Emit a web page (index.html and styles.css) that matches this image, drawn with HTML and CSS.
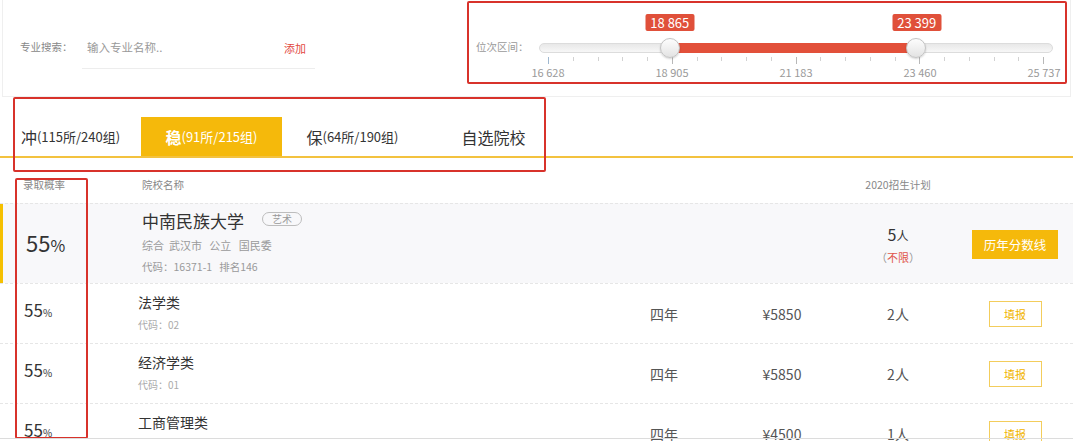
FILE: index.html
```html
<!DOCTYPE html>
<html lang="zh-CN">
<head>
<meta charset="utf-8">
<title>志愿填报</title>
<link rel="stylesheet" href="styles.css">
</head>
<body>
<div class="page">
  <section class="filters">
    <div class="search">
      <span class="search-label">专业搜索：</span>
      <div class="search-input">
        <span class="ph">输入专业名称..</span>
        <span class="add">添加</span>
      </div>
    </div>
    <div class="range">
      <span class="range-label">位次区间：</span>
      <div class="slider">
        <div class="tips">
          <span class="tip" style="left:24.56%">18 865</span>
          <span class="tip" style="left:74.33%">23 399</span>
        </div>
        <div class="track">
          <div class="track-inner">
            <div class="fill" style="left:24.56%;width:49.77%"></div>
            <span class="handle" style="left:24.56%"></span>
            <span class="handle" style="left:74.33%"></span>
          </div>
        </div>
        <div class="ticks">
          <i class="major first"></i><i></i><i></i><i></i><i></i>
          <i class="major"></i><i></i><i></i><i></i><i></i>
          <i class="major"></i><i></i><i></i><i></i><i></i>
          <i class="major"></i><i></i><i></i><i></i><i></i>
          <i class="major"></i>
        </div>
        <div class="scale">
          <span>16 628</span><span>18 905</span><span>21 183</span><span>23 460</span><span>25 737</span>
        </div>
      </div>
    </div>
  </section>

  <nav class="tabs">
    <div class="tab"><b>冲</b>(115所/240组)</div>
    <div class="tab active"><b>稳</b>(91所/215组)</div>
    <div class="tab"><b>保</b>(64所/190组)</div>
    <div class="tab"><b>自选院校</b></div>
  </nav>

  <div class="table">
    <div class="thead">
      <span class="c1">录取概率</span>
      <span class="c2">院校名称</span>
      <span></span>
      <span></span>
      <span class="c5">2020招生计划</span>
      <span></span>
    </div>

    <div class="row uni">
      <div class="c1 prob big">55<small>%</small></div>
      <div class="c2 uni-info">
        <div class="uni-name">中南民族大学 <span class="tag">艺术</span></div>
        <div class="uni-meta">综合&nbsp; 武汉市&nbsp;&nbsp; 公立&nbsp;&nbsp; 国民委</div>
        <div class="uni-code">代码：16371-1&nbsp;&nbsp; 排名146</div>
      </div>
      <div></div>
      <div></div>
      <div class="c5 plan">
        <div class="plan-num">5<small>人</small></div>
        <div class="plan-limit">（<em>不限</em>）</div>
      </div>
      <div class="c6"><span class="btn-solid">历年分数线</span></div>
    </div>

    <div class="row">
      <div class="c1 prob">55<small>%</small></div>
      <div class="c2 major">
        <div class="major-name">法学类</div>
        <div class="major-code">代码：02</div>
      </div>
      <div class="cc">四年</div>
      <div class="cc">¥5850</div>
      <div class="c5 cc">2人</div>
      <div class="c6"><span class="btn-line">填报</span></div>
    </div>

    <div class="row">
      <div class="c1 prob">55<small>%</small></div>
      <div class="c2 major">
        <div class="major-name">经济学类</div>
        <div class="major-code">代码：01</div>
      </div>
      <div class="cc">四年</div>
      <div class="cc">¥5850</div>
      <div class="c5 cc">2人</div>
      <div class="c6"><span class="btn-line">填报</span></div>
    </div>

    <div class="row">
      <div class="c1 prob">55<small>%</small></div>
      <div class="c2 major">
        <div class="major-name">工商管理类</div>
      </div>
      <div class="cc">四年</div>
      <div class="cc">¥4500</div>
      <div class="c5 cc">1人</div>
      <div class="c6"><span class="btn-line">填报</span></div>
    </div>
  </div>

  <div class="mark mark-range"></div>
  <div class="mark mark-tabs"></div>
  <div class="mark mark-prob"></div>
  <div class="bottom-edge"></div>
</div>
</body>
</html>
```

FILE: styles.css
```css
* {
  box-sizing: border-box;
  margin: 0;
  padding: 0;
}

body {
  margin: 0;
  background: #fff;
  color: #333;
  font-family: "Noto Sans CJK SC", "Noto Sans", sans-serif;
  width: 1080px;
  height: 441px;
  overflow: hidden;
}

.page {
  position: relative;
  width: 1080px;
  height: 441px;
  overflow: hidden;
}

/* ---------- filters ---------- */
.filters {
  display: flex;
  width: 1069px;
  height: 97px;
  margin-left: 2px;
  border: 1px solid #efefef;
  border-top: none;
}

.search {
  width: 464px;
  display: flex;
  align-items: flex-start;
  padding: 36px 0 0 17px;
}

.search-label {
  width: 62px;
  font-size: 10.5px;
  line-height: 22px;
  color: #888;
}

.search-input {
  width: 233px;
  height: 33px;
  border-bottom: 1px solid #ededed;
  display: flex;
  justify-content: space-between;
  padding: 0 9px 0 5px;
}

.ph {
  font-size: 11.5px;
  line-height: 22px;
  color: #9a9a9a;
}

.add {
  font-size: 11px;
  line-height: 24px;
  color: #e2483f;
}

.range {
  flex: 1;
  display: flex;
  align-items: flex-start;
  padding-left: 9px;
}

.range-label {
  width: 63px;
  margin-top: 36px;
  font-size: 10.5px;
  line-height: 22px;
  color: #9a9a9a;
}

.slider {
  width: 514px;
}

.tips {
  position: relative;
  height: 17px;
  margin: 14px 9px 0;
}

.tip {
  position: absolute;
  top: 0;
  transform: translateX(-50%);
  background: #e0503a;
  color: #fff;
  font-size: 13px;
  line-height: 17px;
  padding: 0 5px;
  border-radius: 2px;
  white-space: nowrap;
}

.track {
  position: relative;
  height: 10px;
  margin-top: 12px;
  border-radius: 5px;
  border: 1px solid #dcdcdc;
  background: linear-gradient(#e8e8e8, #f7f7f7);
}

.track-inner {
  position: absolute;
  top: -1px;
  bottom: -1px;
  left: 9px;
  right: 9px;
}

.fill {
  position: absolute;
  top: 0;
  bottom: 0;
  background: #e2503a;
}

.handle {
  position: absolute;
  top: 50%;
  width: 20px;
  height: 20px;
  transform: translate(-50%, -50%);
  border-radius: 50%;
  border: 1px solid #c4c4c4;
  background: linear-gradient(#fdfdfd, #e3e3e3);
  box-shadow: 0 1px 2px rgba(0, 0, 0, 0.18);
}

.ticks {
  display: flex;
  justify-content: space-between;
  align-items: flex-start;
  height: 6px;
  margin: 4px 9px 0;
}

.ticks i {
  display: block;
  width: 1px;
  height: 4px;
  background: #d2d2d2;
}

.ticks i.major {
  height: 6px;
  background: #b8b8b8;
}

.ticks i.first {
  background: #9fb8d0;
}

.scale {
  display: flex;
  justify-content: space-between;
  margin: 2px 9px 0;
  font-size: 11px;
  line-height: 14px;
  color: #9a9a9a;
}

.scale span {
  width: 0;
  display: flex;
  justify-content: center;
  white-space: nowrap;
}

/* ---------- tabs ---------- */
.tabs {
  display: flex;
  width: 1073px;
  height: 41px;
  margin-top: 20px;
  border-bottom: 2px solid #f3c23f;
}

.tab {
  width: 141px;
  display: flex;
  align-items: center;
  justify-content: center;
  font-size: 13px;
  color: #333;
  white-space: nowrap;
}

.tab b {
  font-weight: normal;
  font-size: 16px;
}

.tab.active {
  background: #f5b90b;
  color: #fff;
}

.tab.active b {
  font-weight: bold;
}

/* ---------- table ---------- */
.table {
  width: 1073px;
}

.thead,
.row {
  display: grid;
  grid-template-columns: 138px 1fr 88px 148px 92px 125px;
}

.thead {
  height: 45px;
  align-items: end;
  padding-bottom: 11px;
  font-size: 10.5px;
  line-height: 14px;
  color: #888;
}

.thead .c1 {
  padding-left: 23px;
}

.thead .c2 {
  padding-left: 4px;
}

.c5 {
  text-align: center;
  padding-right: 8px;
}

.c6 {
  display: flex;
  justify-content: center;
  padding-left: 9px;
}

.row {
  height: 60px;
  align-items: center;
  border-top: 1px dashed #e6e6e6;
}

.row.uni {
  height: 80px;
  background: #f8f8fa;
  box-shadow: inset 3px 0 0 #f5c000;
}

.prob {
  padding-left: 24px;
  padding-bottom: 5px;
  font-size: 17px;
  line-height: 18px;
  color: #333;
}

.prob small {
  font-size: 10px;
}

.prob.big {
  padding-left: 26px;
  padding-bottom: 0;
  font-size: 22px;
  line-height: 28px;
}

.prob.big small {
  font-size: 16px;
}

.uni-info {
  align-self: start;
  padding: 6px 0 0 4px;
}

.uni-name {
  display: flex;
  align-items: center;
  font-size: 17px;
  line-height: 22px;
  color: #333;
}

.tag {
  margin-left: 18px;
  margin-top: -4px;
  height: 14px;
  padding: 0 9px;
  border: 1px solid #bdbdbd;
  border-radius: 7px;
  font-size: 10px;
  line-height: 12px;
  color: #999;
}

.uni-meta {
  margin-top: 3px;
  font-size: 11px;
  line-height: 20px;
  color: #9a9a9a;
}

.uni-code {
  margin-top: 2px;
  font-size: 10.5px;
  line-height: 20px;
  color: #9a9a9a;
}

.plan-num {
  font-size: 16px;
  line-height: 22px;
  color: #333;
}

.plan-num small {
  font-size: 12px;
}

.plan-limit {
  margin-top: 2px;
  font-size: 11px;
  line-height: 16px;
  color: #999;
}

.plan-limit em {
  font-style: normal;
  color: #e0574c;
}

.btn-solid {
  display: block;
  width: 86px;
  height: 29px;
  line-height: 29px;
  text-align: center;
  background: #f5b90b;
  color: #fff;
  font-size: 12.5px;
  margin-top: 2px;
}

.major {
  align-self: start;
  padding-top: 7px;
}

.major-name {
  font-size: 14px;
  line-height: 22px;
  color: #333;
}

.major-code {
  margin-top: 2px;
  font-size: 10px;
  line-height: 20px;
  color: #aaa;
}

.cc {
  text-align: center;
  font-size: 14px;
  line-height: 16px;
  color: #555;
}

.c5.cc {
  padding-right: 8px;
}

.btn-line {
  display: block;
  width: 53px;
  height: 26px;
  line-height: 24px;
  text-align: center;
  border: 1px solid #f3cd5c;
  color: #f0b400;
  font-size: 11px;
}

/* ---------- annotation overlays ---------- */
.mark {
  position: absolute;
  border: 2px solid #d8322b;
  border-radius: 2px;
  pointer-events: none;
}

.mark-range {
  left: 467px;
  top: 1px;
  width: 600px;
  height: 83px;
}

.mark-tabs {
  left: 13px;
  top: 97px;
  width: 533px;
  height: 75px;
}

.mark-prob {
  left: 15px;
  top: 178px;
  width: 73px;
  height: 261px;
}

.bottom-edge {
  position: absolute;
  left: 0;
  top: 438px;
  width: 1073px;
  height: 1px;
  background: #dcdcdc;
}
```
